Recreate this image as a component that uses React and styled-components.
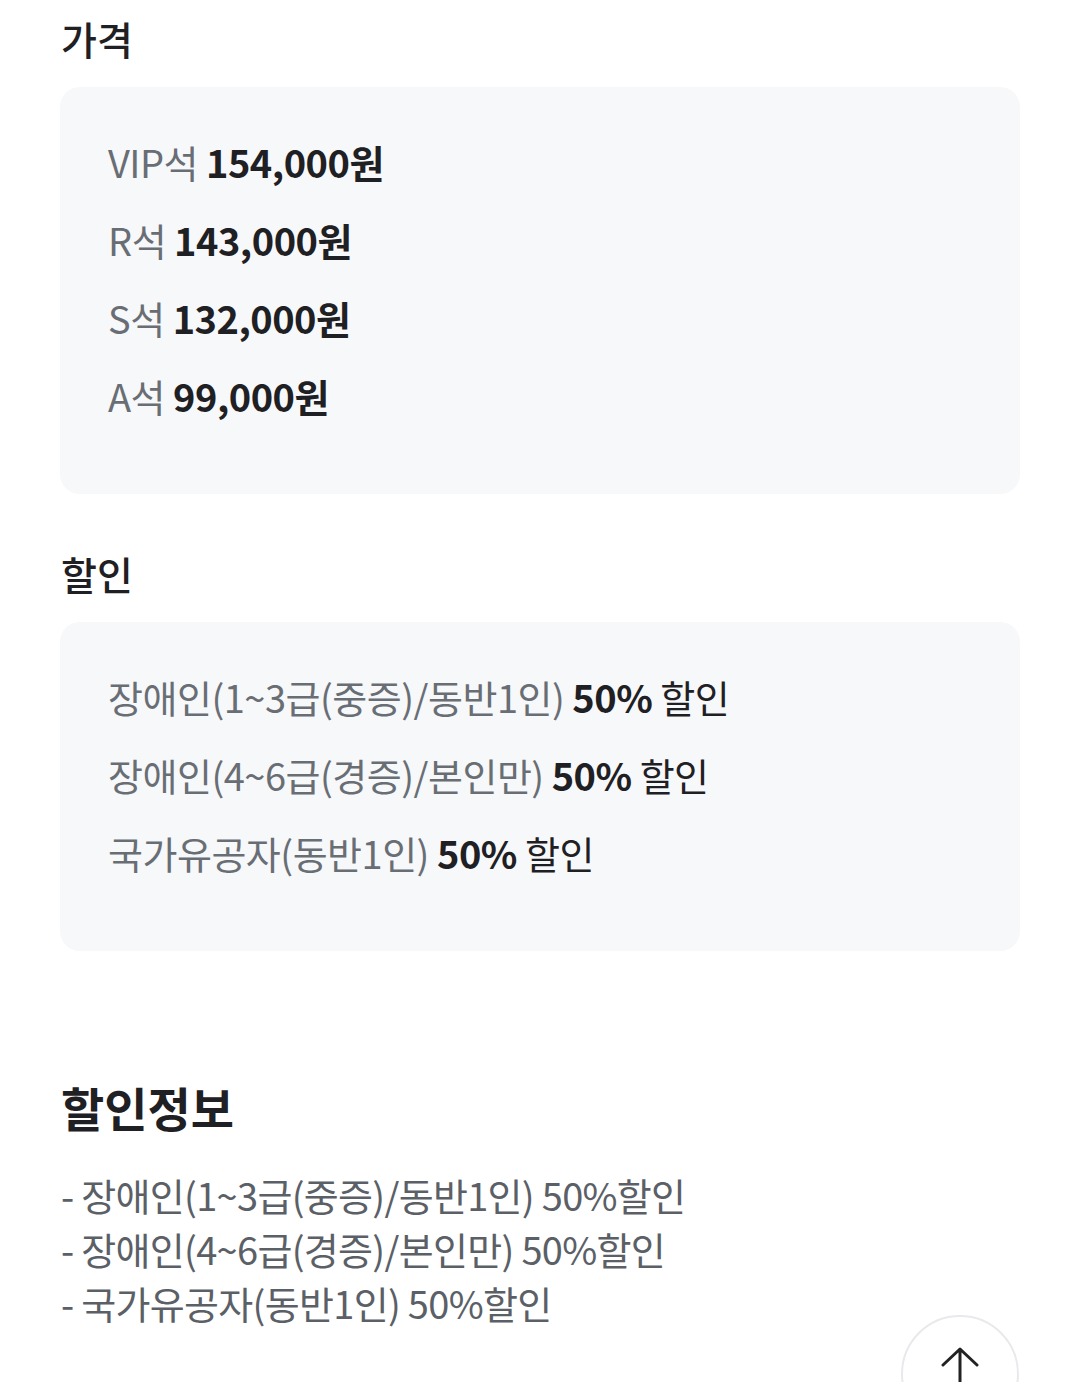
import React from 'react'
import styled, { createGlobalStyle } from 'styled-components'

const prices = [
  { seat: 'VIP석', price: '154,000원' },
  { seat: 'R석', price: '143,000원' },
  { seat: 'S석', price: '132,000원' },
  { seat: 'A석', price: '99,000원' },
]

const discounts = [
  { label: '장애인(1~3급(중증)/동반1인)', rate: '50%' },
  { label: '장애인(4~6급(경증)/본인만)', rate: '50%' },
  { label: '국가유공자(동반1인)', rate: '50%' },
]

const notes = [
  '- 장애인(1~3급(중증)/동반1인) 50%할인',
  '- 장애인(4~6급(경증)/본인만) 50%할인',
  '- 국가유공자(동반1인) 50%할인',
]

const App = () => {
  return (
    <Page>
      <GlobalStyle />
      <SectionTitle>가격</SectionTitle>
      <InfoBox>
        {prices.map((p) => (
          <Row key={p.seat}>
            {p.seat} <Strong>{p.price}</Strong>
          </Row>
        ))}
      </InfoBox>

      <SectionTitle $gap>할인</SectionTitle>
      <InfoBox>
        {discounts.map((d) => (
          <Row key={d.label}>
            {d.label} <Strong>{d.rate}</Strong> <Dark>할인</Dark>
          </Row>
        ))}
      </InfoBox>

      <BigTitle>할인정보</BigTitle>
      <NoteList>
        {notes.map((n) => (
          <Note key={n}>{n}</Note>
        ))}
      </NoteList>

      <TopButton aria-label="맨 위로">
        <svg width="40" height="40" viewBox="0 0 40 40" fill="none">
          <path d="M20 2 V40 M3 18 L20 2 L37 18" stroke="#222" strokeWidth="3" strokeLinecap="round" strokeLinejoin="round" />
        </svg>
      </TopButton>
    </Page>
  )
}

export default App

const GlobalStyle = createGlobalStyle`
  html, body {
    margin: 0;
    padding: 0;
    background: #fff;
  }
  body {
    font-family: "Noto Sans CJK KR", "Noto Sans", sans-serif;
    color: #222;
    overflow: hidden;
  }
`

const Page = styled.div`
  position: relative;
  height: 1382px;
  padding: 12px 60px 0;
  box-sizing: border-box;
`

const SectionTitle = styled.h2`
  margin: ${(p) => (p.$gap ? '53px' : '0')} 0 23px 1px;
  font-size: 39px;
  line-height: 52px;
  font-weight: 500;
  color: #1f2023;
`

const InfoBox = styled.div`
  background: #f7f8fa;
  border-radius: 20px;
  padding: 36px 48px 59px;
`

const Row = styled.div`
  font-size: 38px;
  line-height: 78px;
  color: #696e75;
  letter-spacing: -0.5px;
  white-space: nowrap;
`

const Strong = styled.b`
  font-weight: 700;
  color: #1f2023;
`

const Dark = styled.span`
  color: #1f2023;
`

const BigTitle = styled.h1`
  margin: 126px 0 31px 1px;
  font-size: 47px;
  line-height: 60px;
  font-weight: 700;
  color: #1f2023;
`

const NoteList = styled.div`
  margin-left: 1px;
`

const Note = styled.div`
  font-size: 38px;
  line-height: 54px;
  color: #5b6067;
  letter-spacing: -0.7px;
  white-space: nowrap;
`

const TopButton = styled.button`
  position: absolute;
  left: 901px;
  top: 1315px;
  width: 118px;
  height: 118px;
  border-radius: 50%;
  border: 2px solid #e8e9ed;
  background: #fff;
  display: flex;
  align-items: flex-start;
  justify-content: center;
  padding-top: 30px;
  box-sizing: border-box;
`
